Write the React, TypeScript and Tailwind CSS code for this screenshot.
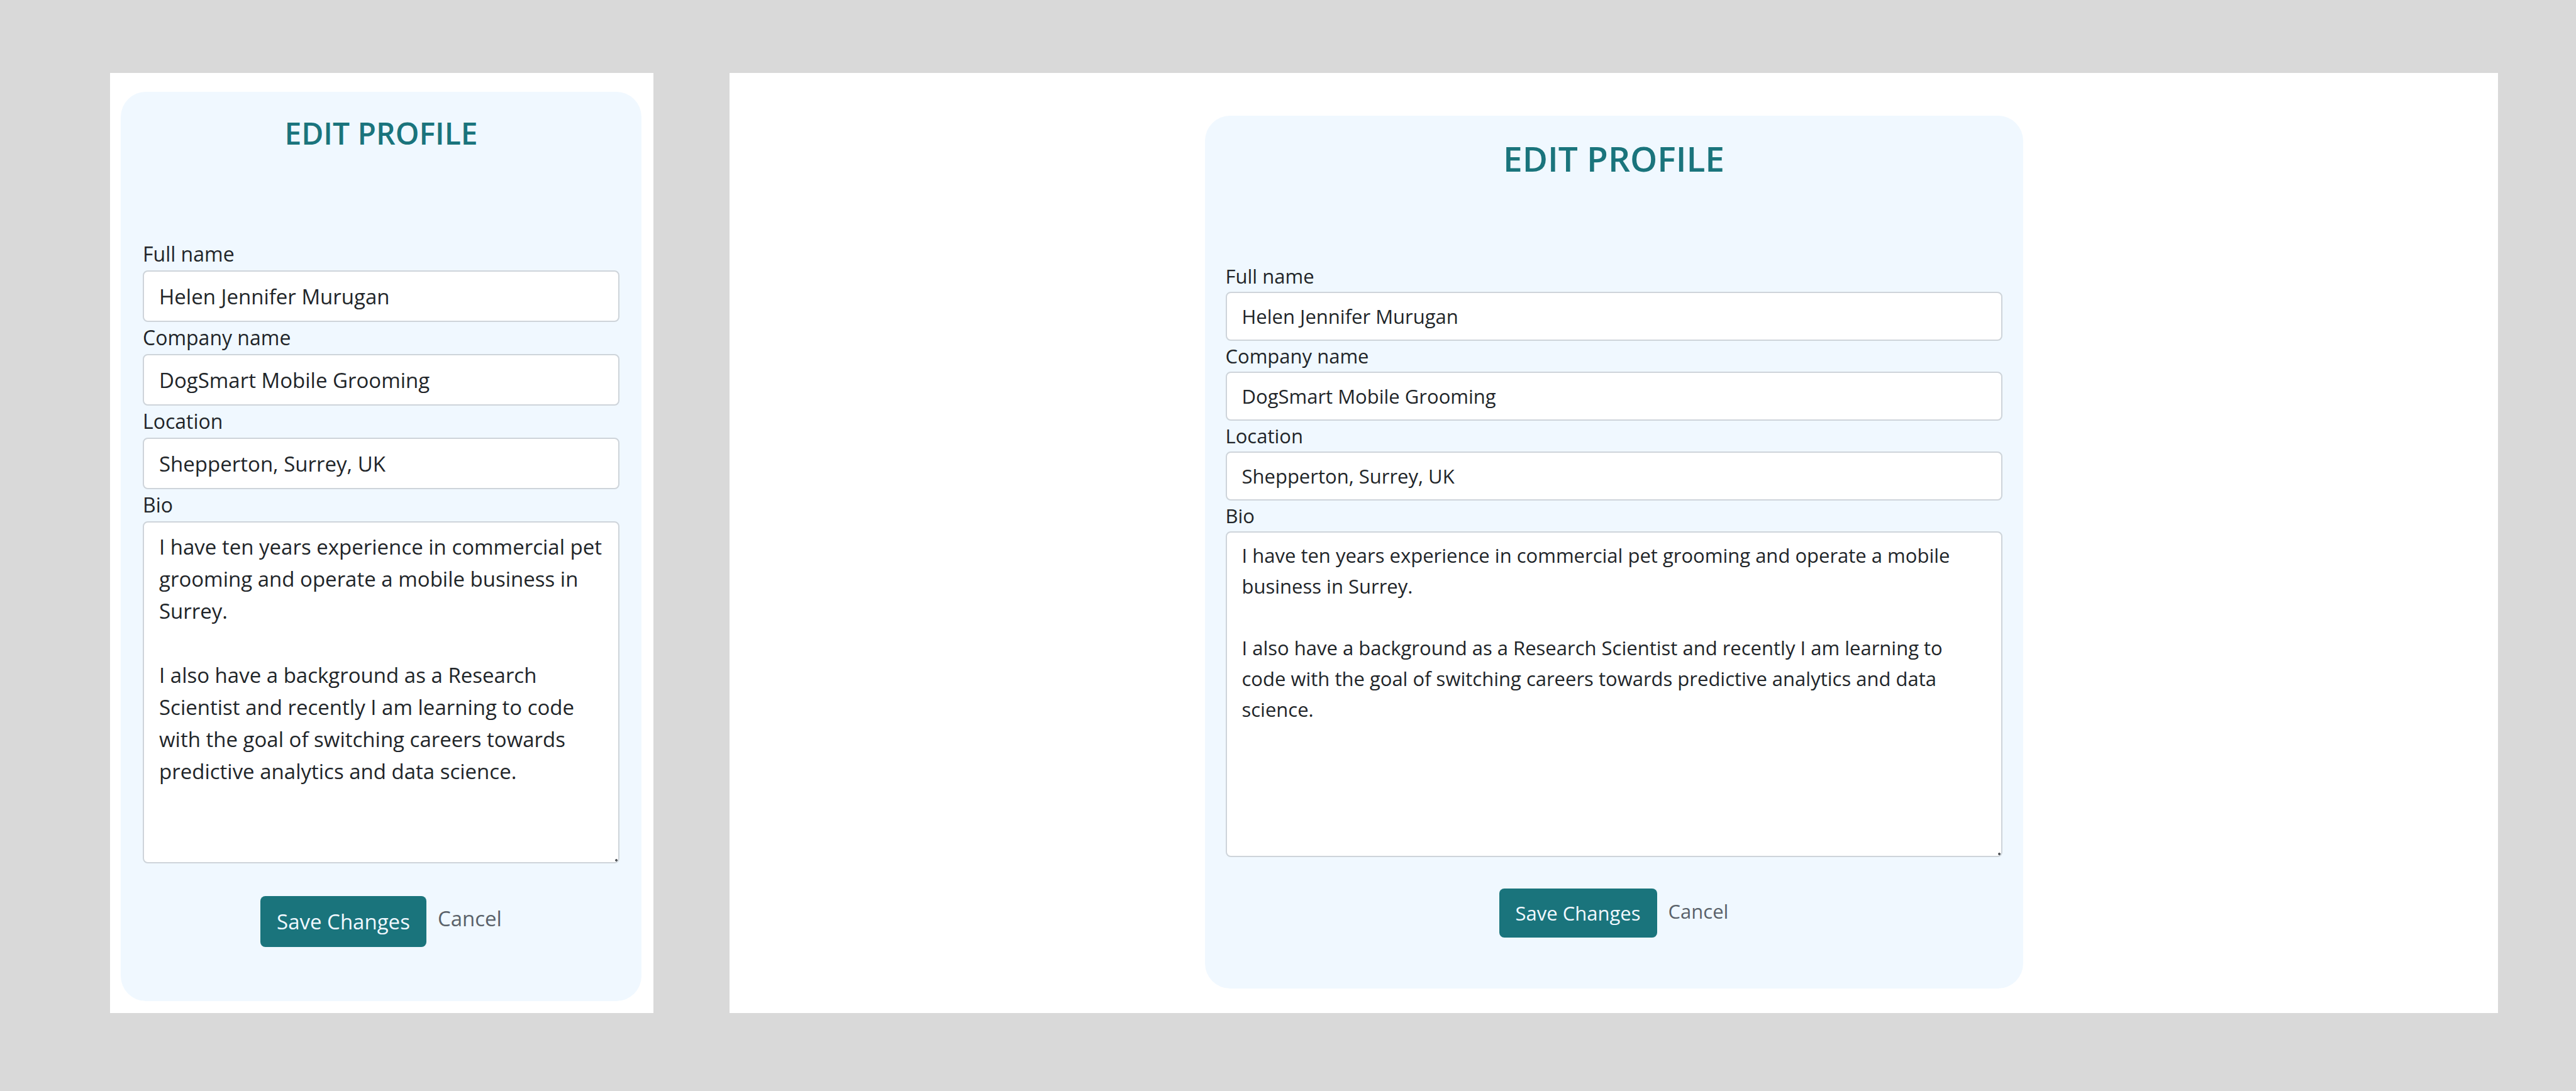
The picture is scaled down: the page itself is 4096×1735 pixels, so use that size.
import { useId } from "react";

type Variant = "mobile" | "desktop";

const styles = {
  mobile: {
    panel: "pl-[17px] pr-[19px] pt-[30px] pb-[19px]",
    card: "w-full px-[35px] pt-[28px]",
    title: "text-[48px] leading-[76px] mb-[129px]",
    label: "text-[32px] leading-[49px] pb-[2px]",
    input: "h-[82px] text-[33px]",
    area: "h-[544px] pt-[13px] text-[33px] leading-[51px]",
    actions: "mt-[52px] text-[33px]",
    save: "h-[81px] px-[26px]",
  },
  desktop: {
    panel: "pt-[68px] pb-[39px]",
    card: "w-[1301px] px-[33px] pt-[30px]",
    title: "text-[55px] leading-[76px] mb-[125px]",
    label: "text-[31px] leading-[49px]",
    input: "h-[78px] text-[31px]",
    area: "h-[518px] pt-[12px] text-[31px] leading-[49px]",
    actions: "mt-[50px] text-[31px]",
    save: "h-[78px] px-[26px]",
  },
};

const fields = [
  { label: "Full name", value: "Helen Jennifer Murugan" },
  { label: "Company name", value: "DogSmart Mobile Grooming" },
  { label: "Location", value: "Shepperton, Surrey, UK" },
];

const bio =
  "I have ten years experience in commercial pet grooming and operate a mobile business in Surrey.\n\nI also have a background as a Research Scientist and recently I am learning to code with the goal of switching careers towards predictive analytics and data science.";

const control =
  "block w-full rounded-[8px] border-2 border-[#ced4da] bg-white pr-[16px] pl-[24px] text-[#212529] outline-none";

function EditProfile({ variant }: { variant: Variant }) {
  const s = styles[variant];
  const id = useId();
  return (
    <section className={`flex min-w-0 justify-center bg-white ${s.panel}`}>
      <form
        className={`max-w-full rounded-[40px] bg-[#f0f8ff] ${s.card}`}
        onSubmit={(e) => e.preventDefault()}
      >
        <h1 className={`text-center font-semibold text-[#1a747c] ${s.title}`}>
          EDIT PROFILE
        </h1>
        {fields.map((f, i) => (
          <div key={f.label}>
            <label htmlFor={`${id}-${i}`} className={`block ${s.label}`}>
              {f.label}
            </label>
            <input
              id={`${id}-${i}`}
              type="text"
              defaultValue={f.value}
              className={`${control} ${s.input}`}
            />
          </div>
        ))}
        <label htmlFor={`${id}-bio`} className={`block ${s.label}`}>
          Bio
        </label>
        <textarea
          id={`${id}-bio`}
          defaultValue={bio}
          spellCheck={false}
          className={`${control} resize-y overflow-auto [&::-webkit-resizer]:bg-[radial-gradient(circle_at_12px_12px,#54585c_2px,transparent_2px)] ${s.area}`}
        />
        <div className={`flex items-start justify-center gap-[18px] ${s.actions}`}>
          <button
            type="submit"
            className={`rounded-[8px] bg-[#1a747c] text-[#f0f8ff] ${s.save}`}
          >
            Save Changes
          </button>
          <a href="#cancel" className="mt-[12px] leading-[48px] text-[#5a626a]">
            Cancel
          </a>
        </div>
      </form>
    </section>
  );
}

export default function App() {
  return (
    <main className="grid min-h-screen grid-cols-[864fr_2812fr] gap-[121px] bg-[#d9d9d9] pt-[116px] pr-[124px] pb-[124px] pl-[175px] font-['Open_Sans',sans-serif] text-[#212529]">
      <EditProfile variant="mobile" />
      <EditProfile variant="desktop" />
    </main>
  );
}
